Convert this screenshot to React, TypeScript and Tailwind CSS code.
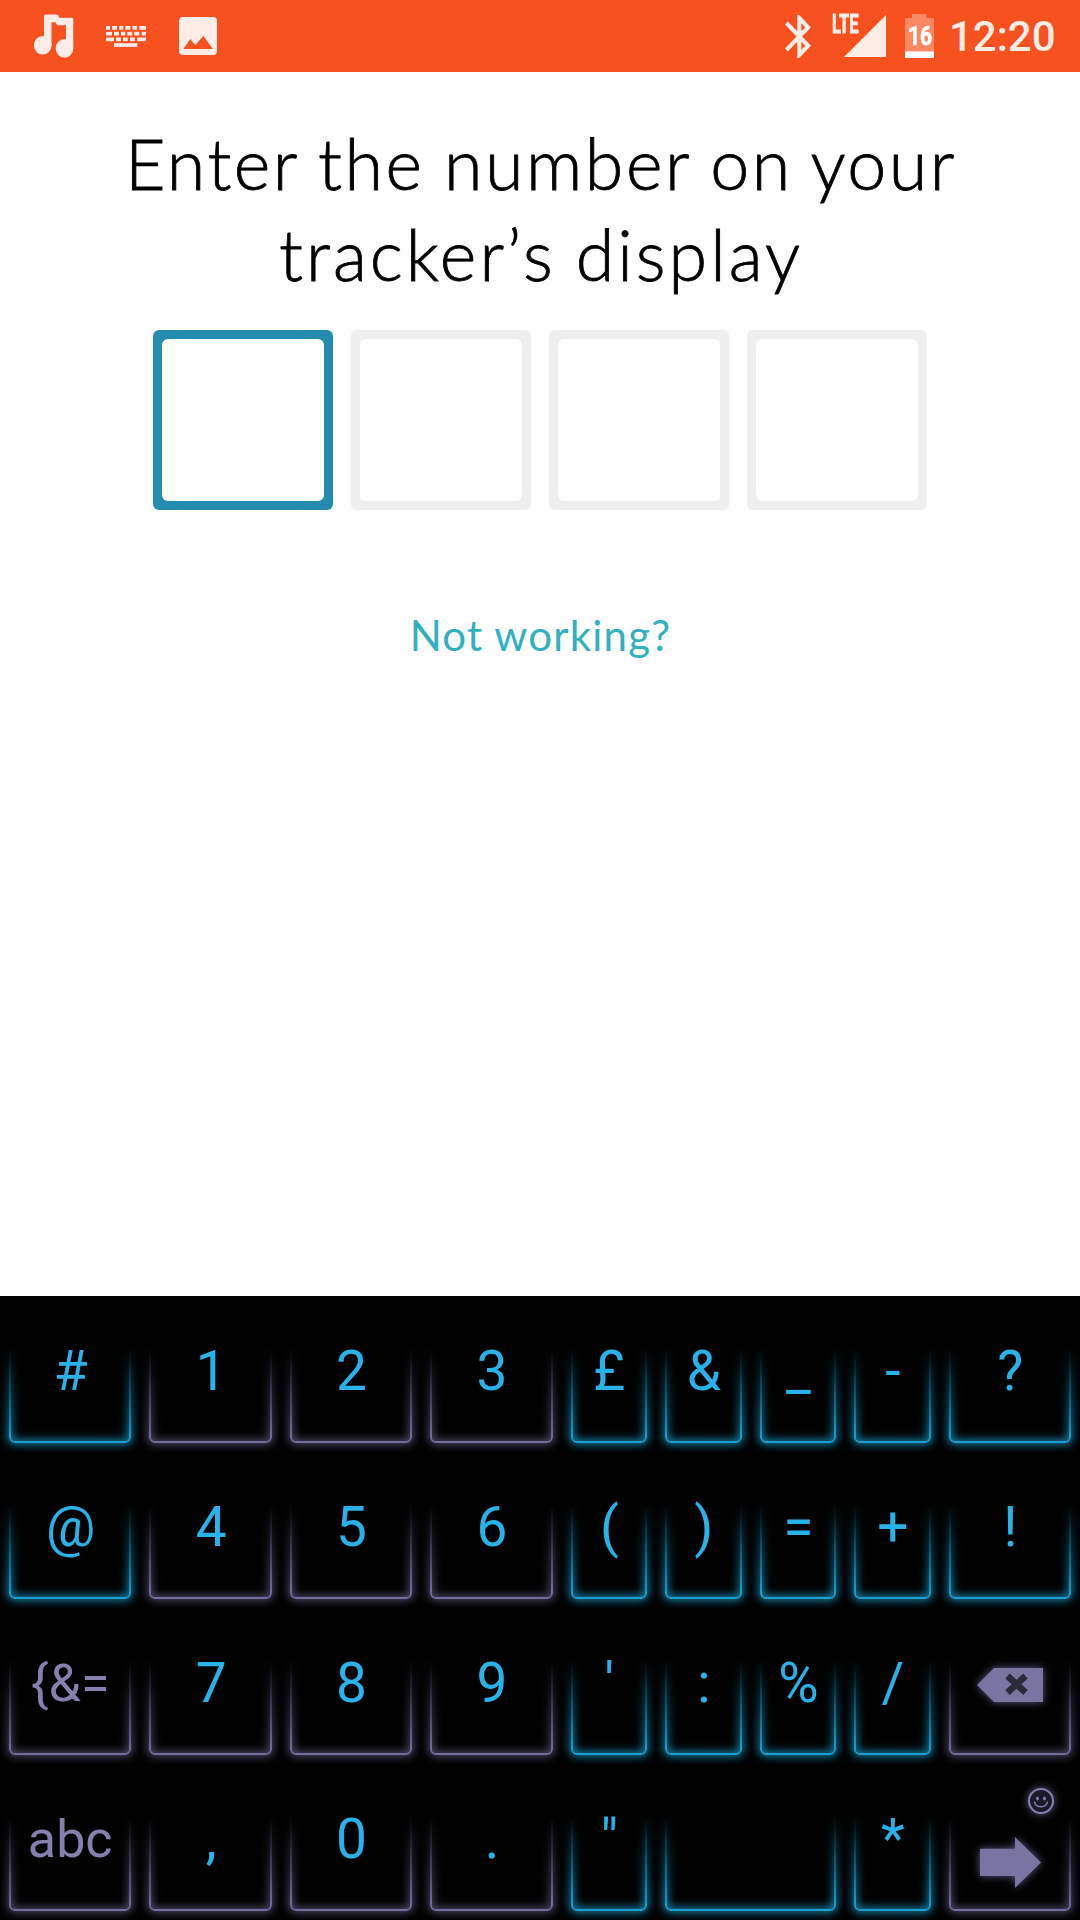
import React from "react";

type Tone = "blue" | "violet";
type KeyDef = { label?: string; tone: Tone; span?: boolean; small?: boolean; icon?: "delete" | "go" };

const b = (label: string): KeyDef => ({ label, tone: "blue" });
const v = (label: string): KeyDef => ({ label, tone: "violet" });

const KEYS: KeyDef[] = [
  b("#"), v("1"), v("2"), v("3"), b("£"), b("&"), b("_"), b("-"), b("?"),
  b("@"), v("4"), v("5"), v("6"), b("("), b(")"), b("="), b("+"), b("!"),
  { label: "{&=", tone: "violet", small: true }, v("7"), v("8"), v("9"), b("'"), b(":"), b("%"), b("/"),
  { tone: "violet", icon: "delete" },
  { label: "abc", tone: "violet", small: true }, v(","), v("0"), v("."), b('"'), { tone: "blue", span: true }, b("*"),
  { tone: "violet", icon: "go" },
];

function DeleteIcon() {
  return (
    <svg className="absolute left-[27px] top-[50px] h-[54px] w-[86px] drop-shadow-[0_0_4px_#5d5a86]" viewBox="967 1658 86 54">
      <path d="M977 1685 994 1668H1043V1702H994Z" fill="#7975a2" />
      <path d="M1007.5 1676 1025.500 1692.500M1025.500 1676 1007.500 1692.500" stroke="#2b2a39" strokeWidth="6.500" />
    </svg>
  );
}

function GoIcon() {
  return (
    <svg className="absolute left-[28px] top-[14px] h-[130px] w-[90px] drop-shadow-[0_0_4px_#5d5a86]" viewBox="968 1778 90 130">
      <path d="M980 1848.700H1015V1837L1041 1862.500 1015 1888V1876H980Z" fill="#7975a2" />
      <circle cx="1041" cy="1801" r="12" fill="#1b1a28" stroke="#8480b0" strokeWidth="2" />
      <ellipse cx="1037.500" cy="1798.500" rx="1.400" ry="2" fill="#8480b0" />
      <ellipse cx="1044.500" cy="1798.500" rx="1.400" ry="2" fill="#8480b0" />
      <path d="M1034.500 1801.500C1035.500 1808.500 1046.500 1808.500 1047.500 1801.500" fill="none" stroke="#8480b0" strokeWidth="1.500" />
    </svg>
  );
}

function Key({ k }: { k: KeyDef }) {
  const frame =
    k.tone === "blue"
      ? "border-[#1f9fd0] shadow-[0_0_9px_2px_#14769c,inset_0_0_9px_2px_#14769c]"
      : "border-[#736ea0] shadow-[0_0_9px_2px_#46435f,inset_0_0_9px_2px_#46435f]";
  return (
    <div className={`relative flex justify-center ${k.span ? "col-span-2" : ""}`}>
      <div className="absolute inset-0 p-[9px] [mask-image:linear-gradient(to_bottom,transparent_52px,rgba(0,0,0,0.5)_95px,black_143px)]">
        <div className={`h-full w-full rounded-[6px] border-2 ${frame}`} />
      </div>
      {k.icon === "delete" && <DeleteIcon />}
      {k.icon === "go" && <GoIcon />}
      {k.label && (
        <span
          className={`relative whitespace-nowrap ${
            k.small ? "pt-[44px] text-[52px] leading-[64px] text-[#8480b0]" : "pt-[43px] pl-px text-[55px] leading-[64px] text-[#27b3ea]"
          }`}
        >
          {k.label}
        </span>
      )}
    </div>
  );
}

const KEYBOARD_ICON: [number, number, number][] = [
  [0, 0, 4], [6, 0, 5], [13, 0, 4.3], [19.3, 0, 5], [26.3, 0, 4.7], [33.3, 0, 6.7],
  [0, 5.8, 6], [8, 5.8, 5], [15, 5.8, 4.3], [21.3, 5.8, 5], [28.3, 5.8, 5], [35.7, 5.8, 4.3],
  [0, 11.5, 8], [10, 11.5, 5], [17, 11.5, 4.7], [24, 11.5, 5], [31.3, 11.5, 8.7],
  [8, 17.2, 23.3],
];

function StatusBar() {
  return (
    <header className="flex h-[72px] items-start bg-[#f6511f] text-[#feece7]">
      <svg className="ml-[34px] mt-[14px] h-[44px] w-[40px]" viewBox="34 14 40 44" fill="currentColor">
        <path d="M44 16Q44 14.500 45.500 14.500H57Q58.500 14.500 59 17.700H71.800Q73.300 17.700 73.300 19.200V48.500H66V25.300H58Q56 25 55.500 22.300H51.500V45.500H44Z" />
        <ellipse cx="42.700" cy="45.300" rx="8.800" ry="9.300" />
        <ellipse cx="64.500" cy="48.400" rx="8.800" ry="9.300" />
      </svg>
      <svg className="ml-[32px] mt-[26px] h-[21px] w-[40px]" viewBox="0 0 40 21" fill="currentColor">
        {KEYBOARD_ICON.map(([x, y, w]) => (
          <rect key={`${x}-${y}`} x={x} y={y} width={w} height="3.700" />
        ))}
      </svg>
      <svg className="ml-[33px] mt-[17px] h-[38px] w-[38px]" viewBox="0 0 38 38">
        <rect width="38" height="38" rx="4" fill="currentColor" />
        <path d="M4.300 32 11.300 22 16.300 28.300 24.300 19 34 32Z" fill="#f6511f" />
      </svg>
      <svg className="ml-[568px] mt-[15px] h-[43px] w-[26px]" viewBox="5 2 12.71 20" preserveAspectRatio="none" fill="currentColor">
        <path d="M17.71 7.71L12 2h-1v7.59L6.410 5 5 6.410 10.590 12 5 17.590 6.410 19 11 14.410V22h1l5.710-5.710-4.300-4.290 4.300-4.290zM13 5.830l1.880 1.880L13 9.590V5.830zm1.880 10.460L13 18.170v-3.760l1.880 1.880z" />
      </svg>
      <div className="relative ml-[22px] h-[72px] w-[54px]">
        <svg className="ml-[11px] mt-[15px] h-[42px] w-[42px]" viewBox="0 0 42 42">
          <path d="M42 0V42H0Z" fill="currentColor" />
        </svg>
        <span className="absolute -left-px top-[10px] origin-left scale-x-[0.66] text-[25px] leading-[30px] font-bold [-webkit-text-stroke:0.9px_#feece7]">
          LTE
        </span>
      </div>
      <div className="relative ml-[18px] mt-[14px] h-[44px] w-[29px]">
        <svg className="h-[44px] w-[29px]" viewBox="0 0 29 44">
          <path d="M0 4H7V0H21.500V4H29V37.300H0Z" fill="#fa8865" />
          <path d="M0 37.300H29V44H0Z" fill="#fff" />
        </svg>
        <span className="absolute left-[3px] top-[8px] origin-left scale-x-[0.84] text-[25px] leading-[30px] font-bold text-white [-webkit-text-stroke:0.7px_white]">
          16
        </span>
      </div>
      <span className="ml-[15px] mt-[12px] text-[42px] leading-[50px] font-medium whitespace-nowrap">12:20</span>
    </header>
  );
}

export default function App() {
  return (
    <div className="flex h-[1920px] w-[1080px] flex-col overflow-hidden bg-white font-['Roboto',sans-serif]">
      <StatusBar />
      <main className="flex flex-1 flex-col items-center font-['Lato',sans-serif]">
        <h1 className="mt-[46px] flex flex-col items-center text-[70px] leading-[91px] font-light whitespace-nowrap text-black [-webkit-text-stroke:0.8px_black]">
          <span className="pl-[2px] tracking-[2.5px] [word-spacing:-2px]">Enter the number on your</span>
          <span className="pl-[2px] tracking-[3px] [word-spacing:-2px]">tracker’s display</span>
        </h1>
        <div className="mt-[30px] flex gap-[18px]">
          {[true, false, false, false].map((active, i) => (
            <div key={i} className={`size-[180px] rounded-[6px] p-[9px] ${active ? "bg-[#258bb1]" : "bg-[#eeeeee]"}`}>
              <div className="h-full w-full rounded-[6px] bg-white" />
            </div>
          ))}
        </div>
        <a className="mt-[100px] pl-px text-[42px] leading-[50px] tracking-[1.2px] text-[#30b1bf]">Not working?</a>
      </main>
      <section className="grid h-[624px] grid-cols-[13fr_13fr_13fr_13fr_8.75fr_8.75fr_8.75fr_8.75fr_13fr] grid-rows-4 bg-black">
        {KEYS.map((k, i) => (
          <Key key={i} k={k} />
        ))}
      </section>
    </div>
  );
}
